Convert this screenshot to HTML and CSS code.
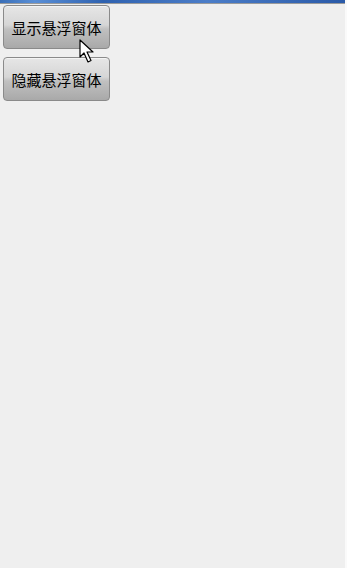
FILE: index.html
```html
<!DOCTYPE html>
<html>
<head>
<meta charset="utf-8">
<link rel="stylesheet" href="styles.css">
</head>
<body>
<div class="screen">
  <div class="topbar"></div>
  <div class="content">
    <button class="btn">显示悬浮窗体</button>
    <button class="btn">隐藏悬浮窗体</button>
  </div>
  <svg class="cursor" width="16" height="26" viewBox="0 0 16 26">
    <path d="M1 1 L1 18 L5 14 L9 23 L12 21.5 L8 13 L14 13 Z" fill="#fff" stroke="#000" stroke-width="1.2" stroke-linejoin="round"/>
  </svg>
</div>
</body>
</html>
```
FILE: styles.css
```css
html, body {
  margin: 0;
  padding: 0;
  width: 347px;
  height: 568px;
  overflow: hidden;
  background: #f0f0f0;
}
.screen {
  position: relative;
  width: 347px;
  height: 568px;
  box-sizing: border-box;
  background: #efefef;
  border-right: 2px solid #fafafa;
}
.topbar {
  height: 3px;
  background: linear-gradient(90deg, #3a6fb8 0%, #5a8fd6 10%, #2f62b0 30%, #4b7dc8 60%, #2a5aa8 100%);
  border-bottom: 1px solid #9a9a9a;
}
.content {
  display: flex;
  flex-direction: column;
  align-items: flex-start;
  gap: 8px;
  padding: 1px 0 0 3px;
}
.btn {
  width: 107px;
  height: 44px;
  border: 1px solid #8a8a8a;
  border-radius: 4px;
  background: linear-gradient(180deg, #e6e6e6 0%, #d6d6d6 45%, #c0c0c0 55%, #a9a9a9 100%);
  box-shadow: inset 0 1px 0 #f4f4f4;
  font-family: "Noto Sans CJK SC", "Noto Sans", sans-serif;
  font-size: 15px;
  font-weight: 400;
  color: #000;
  padding: 0;
  margin: 0;
}
.cursor {
  position: absolute;
  left: 79px;
  top: 39px;
}
```
